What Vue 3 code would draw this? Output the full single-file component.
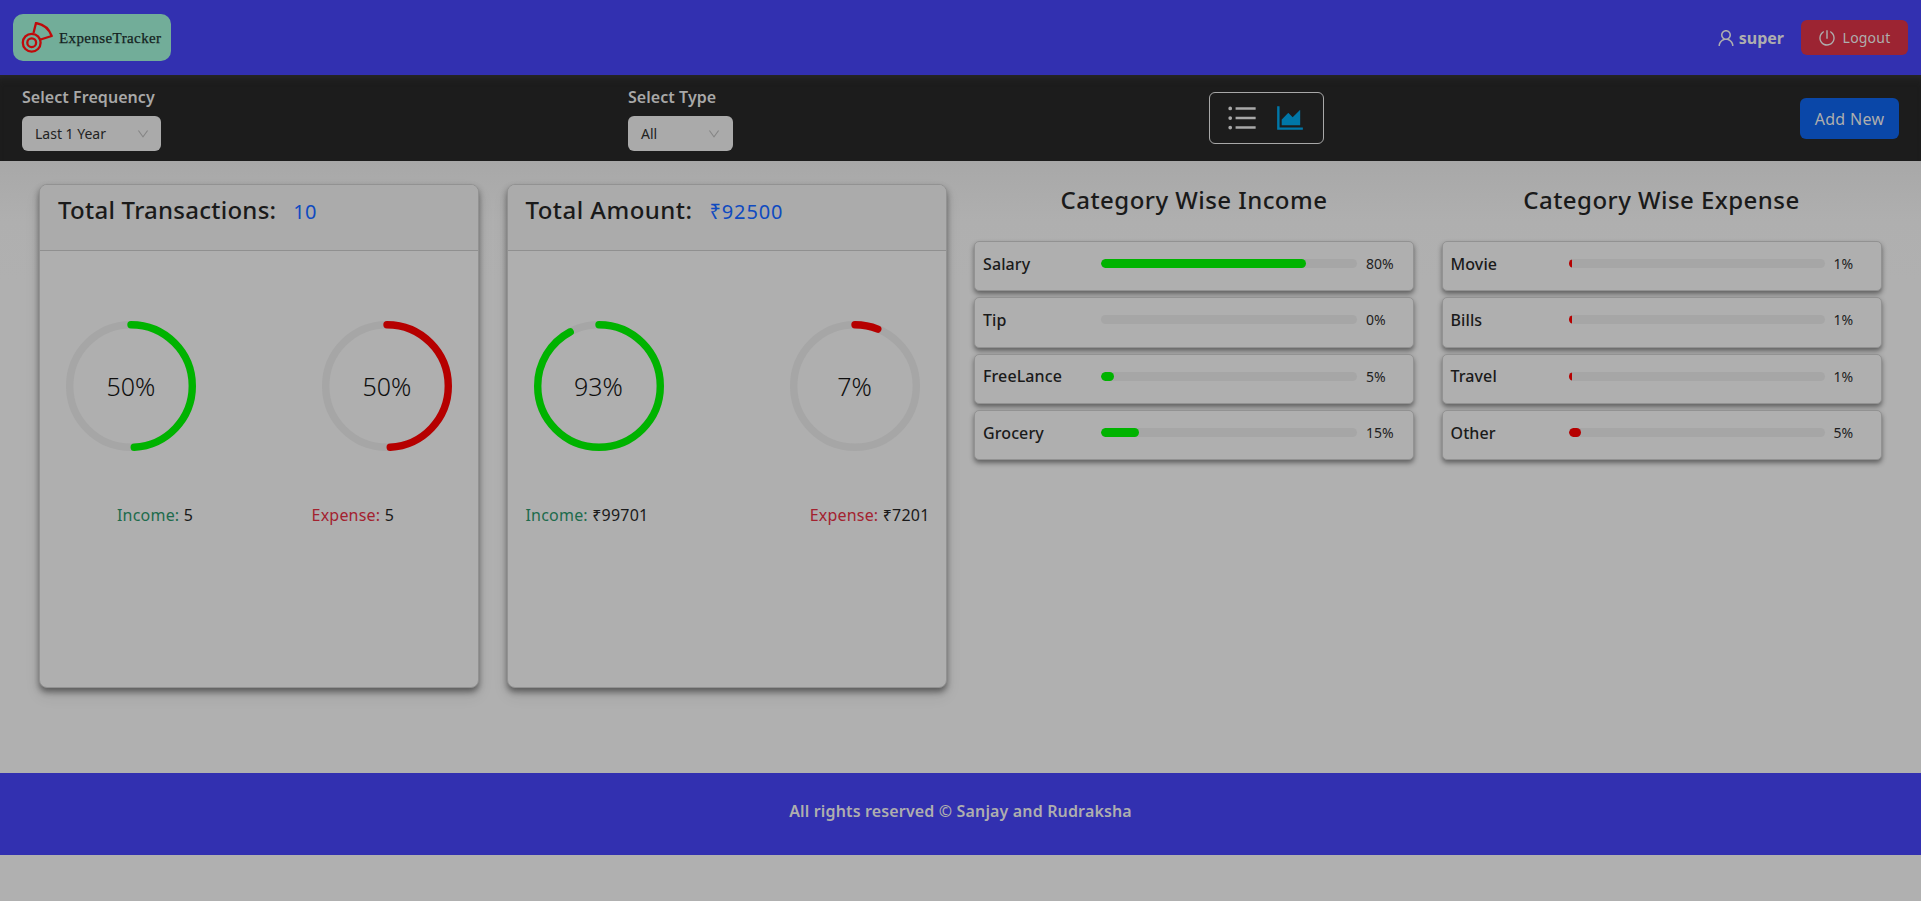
<script setup>
const iconPaths = {
  list: 'M912 192H328c-4.4 0-8 3.6-8 8v56c0 4.4 3.6 8 8 8h584c4.4 0 8-3.6 8-8v-56c0-4.4-3.6-8-8-8zm0 284H328c-4.4 0-8 3.6-8 8v56c0 4.4 3.6 8 8 8h584c4.4 0 8-3.6 8-8v-56c0-4.4-3.6-8-8-8zm0 284H328c-4.4 0-8 3.6-8 8v56c0 4.4 3.6 8 8 8h584c4.4 0 8-3.6 8-8v-56c0-4.4-3.6-8-8-8zM104 228a56 56 0 10112 0 56 56 0 10-112 0zm0 284a56 56 0 10112 0 56 56 0 10-112 0zm0 284a56 56 0 10112 0 56 56 0 10-112 0z',
  area: 'M888 792H200V168c0-4.4-3.6-8-8-8h-56c-4.4 0-8 3.6-8 8v688c0 4.4 3.6 8 8 8h752c4.4 0 8-3.6 8-8v-56c0-4.4-3.6-8-8-8zm-616-64h536c4.4 0 8-3.6 8-8V284c0-7.2-8.7-10.7-13.7-5.7L592 488.6l-125.4-124a8.03 8.03 0 00-11.3 0l-189 189.6a7.87 7.87 0 00-2.3 5.6V720c0 4.4 3.6 8 8 8z',
  user: 'M858.5 763.6a374 374 0 00-80.6-119.5 375.63 375.63 0 00-119.5-80.6c-.4-.2-.8-.3-1.2-.5C719.5 518 760 444.7 760 362c0-137-111-248-248-248S264 225 264 362c0 82.7 40.5 156 102.8 201.1-.4.2-.8.3-1.2.5-44.8 18.9-85 46-119.5 80.6a375.63 375.63 0 00-80.6 119.5A371.7 371.7 0 00136 901.8a8 8 0 008 8.2h60c4.4 0 8-3.5 8.1-7.8 2-77.2 33-149.5 87.8-204.3 56.7-56.7 132-87.9 212.2-87.9s155.5 31.2 212.2 87.9C779 752.7 810 825 812 902.2c.1 4.4 3.6 7.8 8 7.8h60a8 8 0 008-8.2c-1-47.8-10.9-94.3-29.5-138.2zM512 534c-45.9 0-89.1-17.9-121.6-50.4S340 407.9 340 362c0-45.9 17.9-89.1 50.4-121.6S466.1 190 512 190s89.1 17.9 121.6 50.4S684 316.1 684 362c0 45.9-17.9 89.1-50.4 121.6S557.9 534 512 534z',
  power: 'M705.6 124.9a8 8 0 00-11.6 7.2v64.2c0 5.5 2.9 10.6 7.5 13.6a352.2 352.2 0 0162.2 49.8c32.7 32.8 58.4 70.9 76.3 113.3a355 355 0 0127.9 138.7c0 48.1-9.4 94.8-27.9 138.7a355.92 355.92 0 01-76.3 113.3 353.06 353.06 0 01-113.2 76.4c-43.8 18.6-90.5 28-138.5 28s-94.7-9.4-138.5-28a353.06 353.06 0 01-113.2-76.4A355.92 355.92 0 01184 650.4a355 355 0 01-27.9-138.7c0-48.1 9.4-94.8 27.9-138.7 17.9-42.4 43.6-80.5 76.3-113.3 19-19 39.8-35.6 62.2-49.8 4.7-2.9 7.5-8.1 7.5-13.6V132c0-6-6.3-9.8-11.6-7.2C178.5 195.2 82 339.3 80 506.3 77.2 745.1 272.5 943.5 511.2 944c239 .5 432.8-193.3 432.8-432.4 0-169.2-97-315.7-238.4-386.7zM480 560h64c4.4 0 8-3.6 8-8V88c0-4.4-3.6-8-8-8h-64c-4.4 0-8 3.6-8 8v464c0 4.4 3.6 8 8 8z',
  down: 'M884 256h-75c-5.1 0-9.9 2.5-12.9 6.6L512 654.2 227.9 262.6c-3-4.1-7.8-6.6-12.9-6.6h-75c-6.5 0-10.3 7.4-6.5 12.7l352.6 486.1c12.8 17.6 39 17.6 51.7 0l352.6-486.1c3.9-5.3.1-12.7-6.4-12.7z'
}

const R = 61.3
const C = 2 * Math.PI * R
const dash = (p) => `${((p * 3.6 - 3.4) / 360) * C} ${C}`
const fillWidth = (p) => (p ? `max(${p}%, 3.5px)` : '0')

const cards = [
  {
    key: 'count', title: 'Total Transactions:', value: '10', cardClass: 'card-count',
    rings: [{ p: 50, color: '#00b300' }, { p: 50, color: '#b60000' }],
    income: '5', expense: '5'
  },
  {
    key: 'amount', title: 'Total Amount:', value: '₹92500', cardClass: 'card-amount',
    rings: [{ p: 93, color: '#00b300' }, { p: 7, color: '#b60000' }],
    income: '₹99701', expense: '₹7201'
  }
]

const categories = [
  {
    title: 'Category Wise Income', color: '#00b300',
    rows: [
      { name: 'Salary', p: 80 }, { name: 'Tip', p: 0 },
      { name: 'FreeLance', p: 5 }, { name: 'Grocery', p: 15 }
    ]
  },
  {
    title: 'Category Wise Expense', color: '#b60000',
    rows: [
      { name: 'Movie', p: 1 }, { name: 'Bills', p: 1 },
      { name: 'Travel', p: 1 }, { name: 'Other', p: 5 }
    ]
  }
]
</script>

<template>
  <div class="page">
    <header class="topbar">
      <div class="brand">
        <svg class="brand-mark" viewBox="0 0 32 32" width="32" height="32" fill="none" stroke="#c00a0a">
          <circle cx="10.7" cy="20.7" r="8.9" stroke-width="2.3" />
          <circle cx="10.7" cy="20.7" r="4.4" stroke-width="2.3" />
          <path d="M12.5 11 L15 1 A20 20 0 0 1 30.7 14 L18 18" stroke-width="2.3" stroke-linejoin="round" />
        </svg>
        <span class="brand-name">ExpenseTracker</span>
      </div>
      <div class="account">
        <svg class="icon user-icon" viewBox="64 64 896 896" width="18" height="18"><path :d="iconPaths.user" /></svg>
        <strong class="user-name">super</strong>
        <button class="logout" type="button">
          <svg class="icon" viewBox="64 64 896 896" width="16" height="16"><path :d="iconPaths.power" /></svg>
          <span>Logout</span>
        </button>
      </div>
    </header>

    <section class="filters">
      <div class="filter filter-frequency">
        <label>Select Frequency</label>
        <div class="select select-frequency">
          <span>Last 1 Year</span>
          <svg class="icon" viewBox="64 64 896 896" width="12" height="12"><path :d="iconPaths.down" /></svg>
        </div>
      </div>
      <div class="filter filter-type">
        <label>Select Type</label>
        <div class="select select-type">
          <span>All</span>
          <svg class="icon" viewBox="64 64 896 896" width="12" height="12"><path :d="iconPaths.down" /></svg>
        </div>
      </div>
      <div class="view-toggle">
        <svg class="icon" viewBox="64 64 896 896" width="30" height="30"><path :d="iconPaths.list" /></svg>
        <svg class="icon active" viewBox="64 64 896 896" width="30" height="30"><path :d="iconPaths.area" /></svg>
      </div>
      <button class="add-new" type="button">Add New</button>
    </section>

    <main class="content">
      <article v-for="card in cards" :key="card.key" class="card" :class="card.cardClass">
        <div class="card-head">
          <span class="card-title">{{ card.title }}</span>
          <span class="card-value">{{ card.value }}</span>
        </div>
        <div class="rings">
          <div v-for="(ring, i) in card.rings" :key="i" class="ring">
            <svg viewBox="0 0 130 130" width="130" height="130">
              <circle cx="65" cy="65" :r="R" fill="none" stroke="#a6a6a6" stroke-width="7.4" />
              <circle cx="65" cy="65" :r="R" fill="none" :stroke="ring.color" stroke-width="7.4"
                stroke-linecap="round" :stroke-dasharray="dash(ring.p)" transform="rotate(-90 65 65)" />
            </svg>
            <span class="ring-text">{{ ring.p }}%</span>
          </div>
        </div>
        <div class="legend">
          <span><span class="income">Income:</span> {{ card.income }}</span>
          <span><span class="expense">Expense:</span> {{ card.expense }}</span>
        </div>
      </article>

      <section v-for="cat in categories" :key="cat.title" class="category">
        <h2>{{ cat.title }}</h2>
        <div class="cat-rows">
          <div v-for="row in cat.rows" :key="row.name" class="cat-row">
            <span class="cat-name">{{ row.name }}</span>
            <div class="track">
              <div class="fill" :style="{ width: fillWidth(row.p), background: cat.color }"></div>
            </div>
            <span class="cat-pct">{{ row.p }}%</span>
          </div>
        </div>
      </section>
    </main>

    <footer class="footer">All rights reserved © Sanjay and Rudraksha</footer>
  </div>
</template>

<style>
html, body { margin: 0; background: #b0b0b0; }
</style>

<style scoped>
.page {
  min-height: 901px;
  background: #b0b0b0;
  font-family: "Noto Sans", sans-serif;
  color: #1a1a1a;
  overflow: hidden;
}
.icon { fill: currentColor; display: block; flex: none; }

.topbar {
  height: 75px;
  background: #3230b0;
  display: flex;
  align-items: flex-start;
  justify-content: space-between;
  padding: 14px 13px 0 13px;
  box-sizing: border-box;
}
.brand {
  width: 158px;
  height: 47px;
  border-radius: 10px;
  background: #72ad99;
  display: flex;
  align-items: center;
  box-sizing: border-box;
  padding: 0 0 0 8px;
}
.brand-mark { flex: none; }
.brand-name {
  font-family: "Liberation Serif", serif;
  font-size: 15px;
  color: #14221e;
  margin-left: 6px;
  letter-spacing: 0.4px;
  padding-top: 2px;
  -webkit-text-stroke: 0.25px #14221e;
}
.account {
  display: flex;
  align-items: center;
  color: #aeaeae;
  margin-top: 6px;
}
.user-icon { margin-top: 1px; }
.user-name {
  font-size: 16px;
  margin: 0 17px 0 4px;
}
.logout {
  width: 107px;
  height: 35px;
  background: #9c2432;
  color: #aeaeae;
  border: none;
  border-radius: 6px;
  display: flex;
  align-items: center;
  justify-content: center;
  gap: 8px;
  font: 14px "Noto Sans", sans-serif;
  letter-spacing: 0.2px;
  padding: 0;
}

.filters {
  height: 86px;
  background: #1c1c1c;
  box-sizing: border-box;
  display: grid;
  grid-template-columns: 606px 581px 114.5px 1fr;
  align-items: start;
  padding: 0 22px 0 22px;
  box-shadow: inset 0 8px 8px -6px #2a2a2a;
}
.filter label {
  display: block;
  font-size: 16px;
  font-weight: 600;
  color: #a8a8a8;
  line-height: 22px;
  margin-top: 11px;
  letter-spacing: 0.05px;
}
.select {
  height: 35px;
  margin-top: 8px;
  border-radius: 6px;
  background: #aaaaaa;
  display: flex;
  align-items: center;
  justify-content: space-between;
  padding: 0 13px;
  box-sizing: border-box;
  font-size: 14px;
  color: #222;
}
.select .icon { color: #858585; }
.select-frequency { width: 139px; padding-right: 12px; }
.select-type { width: 105px; }
.view-toggle {
  height: 52px;
  margin-top: 17px;
  border: 1px solid #a8a8a8;
  border-radius: 6px;
  box-sizing: border-box;
  display: flex;
  align-items: center;
  gap: 18px;
  padding-left: 17px;
  color: #a8a8a8;
}
.view-toggle .active { color: #0077a8; }
.add-new {
  justify-self: end;
  width: 99px;
  height: 41px;
  margin-top: 23px;
  background: #0a47a8;
  border: none;
  border-radius: 6px;
  color: #aeaeae;
  font: 16px "Noto Sans", sans-serif;
  letter-spacing: 0.3px;
  padding: 0;
}

.content {
  height: 612px;
  box-sizing: border-box;
  display: grid;
  grid-template-columns: repeat(4, 440px);
  column-gap: 27.5px;
  align-items: start;
  padding: 23px 0 0 39px;
  background: linear-gradient(#a8a8a8, #afafaf 60px, #b0b0b0 120px);
}
.card {
  height: 504px;
  box-sizing: border-box;
  border: 1px solid #929292;
  border-radius: 8px;
  background: #afafaf;
  box-shadow: 0 4px 6px rgba(0, 0, 0, 0.45), 0 8px 16px rgba(0, 0, 0, 0.08);
  overflow: hidden;
}
.card-head {
  height: 66px;
  box-sizing: border-box;
  background: #ababab;
  border-bottom: 1px solid #909090;
  padding: 8px 18px 0;
  display: flex;
  align-items: baseline;
  gap: 17px;
}
.card-title {
  font-size: 24px;
  font-weight: 500;
  color: #1a1a1a;
  letter-spacing: 0.25px;
}
.card-value {
  font-size: 20px;
  color: #0f4ac0;
  letter-spacing: 0.1px;
}
.card-amount .card-title { letter-spacing: 0.45px; }
.card-amount .card-value { letter-spacing: 0.9px; }
.rings {
  display: flex;
  justify-content: space-between;
  padding: 70px 26px 0;
}
.ring {
  position: relative;
  width: 130px;
  height: 130px;
}
.ring svg { display: block; }
.ring-text {
  position: absolute;
  inset: 0;
  display: flex;
  align-items: center;
  justify-content: center;
  font-size: 25px;
  font-weight: 300;
  color: #0e0e0e;
}
.legend {
  display: flex;
  justify-content: space-between;
  padding: 52px 16px 0 18px;
  font-size: 16px;
  line-height: 24px;
  letter-spacing: 0.2px;
}
.card-count .legend { padding-left: 77px; padding-right: 84px; }
.income { color: #1d6b4c; }
.expense { color: #a3222f; }

.category h2 {
  margin: 0;
  height: 57px;
  text-align: center;
  font-size: 24px;
  font-weight: 500;
  line-height: 32px;
  color: #1a1a1a;
  letter-spacing: 0.45px;
}
.cat-rows {
  display: flex;
  flex-direction: column;
  gap: 6px;
}
.cat-row {
  height: 50.3px;
  box-sizing: border-box;
  border: 1px solid #929292;
  border-radius: 5px;
  background: #afafaf;
  box-shadow: 0 3px 5px rgba(0, 0, 0, 0.45);
  display: grid;
  grid-template-columns: 109px 256px auto;
  column-gap: 9px;
  align-items: center;
  padding: 0 0 5px 8px;
}
.cat-name {
  font-size: 16px;
  font-weight: 500;
  color: #1a1a1a;
  letter-spacing: 0.1px;
}
.track {
  height: 9px;
  border-radius: 5px;
  background: #a6a6a6;
  overflow: hidden;
}
.fill { height: 100%; border-radius: 5px; }
.cat-pct {
  font-size: 14px;
  color: #1e1e1e;
}

.footer {
  height: 82px;
  background: #3230b0;
  color: #aeaeae;
  display: flex;
  align-items: center;
  justify-content: center;
  font-size: 16px;
  font-weight: 600;
  letter-spacing: 0.15px;
  box-sizing: border-box;
  padding-bottom: 6px;
}
</style>
